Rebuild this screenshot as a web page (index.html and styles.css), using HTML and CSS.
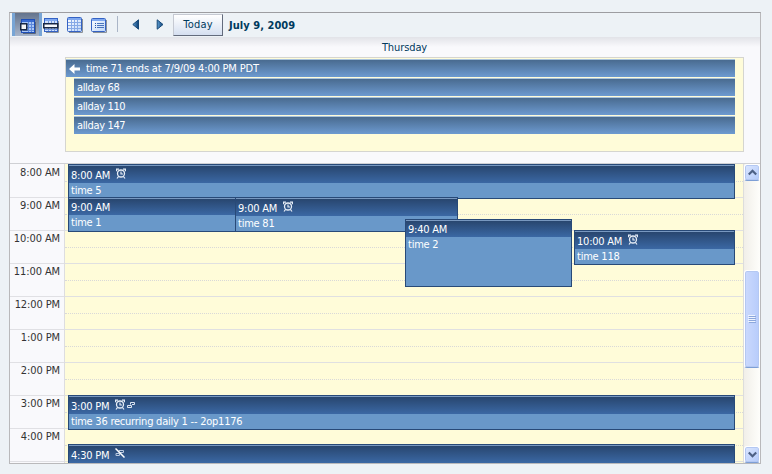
FILE: index.html
```html
<!DOCTYPE html>
<html lang="en">
<head>
<meta charset="utf-8">
<title>Calendar</title>
<link rel="stylesheet" href="styles.css">
</head>
<body>
<svg width="0" height="0" class="defs">
  <defs>
    <linearGradient id="cell" x1="0" y1="0" x2="1" y2="1"><stop offset="0" stop-color="#fff"/><stop offset="1" stop-color="#bcd5f8"/></linearGradient>
    <linearGradient id="tri" x1="0" y1="0" x2="1" y2="0"><stop offset="0" stop-color="#5f9fd4"/><stop offset="1" stop-color="#0c3e73"/></linearGradient>
    <symbol id="month" viewBox="0 0 16 16">
      <path d="M2 15.5H15.5V2" stroke="#8a9199" fill="none"/>
      <rect x=".5" y=".5" width="14" height="14" rx="1" fill="url(#cell)" stroke="#3462c4"/>
      <path d="M1 2H14" stroke="#7fa8ef" stroke-width="2"/>
      <path d="M4.5 3V14M7.5 3V14M10.5 3V14M1 5.5H14M1 8.5H14M1 11.5H14" stroke="#86a9e6"/>
    </symbol>
    <symbol id="alarm" viewBox="0 0 10 11">
      <circle cx="5" cy="5.5" r="3.500" fill="none" stroke="#e9eff7" stroke-width="1.300"/>
      <path d="M5 3.500V6H7M1 10.500L2.600 8.400M9 10.500L7.400 8.400M.6 3.300V1.200H3M9.400 3.300V1.200H7" stroke="#e4ebf5" stroke-width="1.200" fill="none"/>
    </symbol>
    <symbol id="recur" viewBox="0 0 10 10">
      <path d="M3.500 4.500V2.500H7.500V4.500H5M.5 5.500H4.500V7.500H.5Z" stroke="#dce5f2" fill="none"/>
    </symbol>
  </defs>
</svg>
<main class="calendar">
  <header class="toolbar">
    <span class="view selected"><svg width="16" height="16" viewBox="0 0 16 16">
      <path d="M3 14.500H15.500V3" stroke="#596579" fill="none"/>
      <rect x="1.500" y=".5" width="13" height="13" fill="#a9c6f5" stroke="#1e4fb8"/>
      <path d="M2 2H14" stroke="#386bd2" stroke-width="2"/><path d="M8.500 3V13M11.500 3V13M3 5.500H14M3 8.500H14M3 11.500H14" stroke="#5c88dc"/>
      <rect x=".75" y="4.750" width="6" height="6" fill="#f4f4f4" stroke="#172745" stroke-width="1.500"/></svg></span>
    <svg class="icon week" width="17" height="16" viewBox="0 0 17 16">
      <path d="M3 14.500H15.500V3" stroke="#8a9199" fill="none"/>
      <rect x="1.500" y=".5" width="13" height="13" fill="#d2e2fb" stroke="#3462c4"/>
      <path d="M2 2H14" stroke="#7fa8ef" stroke-width="2"/><path d="M5.500 3V13M8.500 3V13M11.500 3V13M2 11.500H14" stroke="#7298e0"/>
      <rect x=".75" y="5.750" width="14" height="4" fill="#f7f9fc" stroke="#172745" stroke-width="1.500"/></svg>
    <svg class="icon month" width="16" height="16"><use href="#month"/></svg>
    <svg class="icon list" width="16" height="16" viewBox="0 0 16 16">
      <path d="M2 14.500H15.500V2" stroke="#8a9199" fill="none"/>
      <rect x=".5" y=".5" width="14" height="13" rx="1" fill="url(#cell)" stroke="#3462c4"/>
      <path d="M1 2H14" stroke="#7fa8ef" stroke-width="2"/>
      <path d="M6 5.500H13M6 7.500H13M6 9.500H13" stroke="#4a74bb"/><path d="M4 5.500H5M4 7.500H5M4 9.500H5" stroke="#2855aa"/></svg>
    <i class="separator"></i>
    <svg class="prev" width="8" height="11" viewBox="0 0 8 11"><path d="M6.500 .8V10.200L.8 5.500Z" fill="url(#tri)" stroke="#164878"/></svg>
    <svg class="next" width="8" height="11" viewBox="0 0 8 11"><path d="M1.200 .8V10.200L7 5.500Z" fill="url(#tri)" stroke="#164878"/></svg>
    <button class="today">Today</button>
    <h1 class="date">July 9, 2009</h1>
  </header>
  <section class="top">
    <div class="weekday">Thursday</div>
    <div class="allday">
      <div class="bar continued"><svg width="11" height="10" viewBox="0 0 11 10"><path d="M5.500 0V3.500H11V6.500H5.500V10L0 5Z" fill="#fff"/></svg><span>time 71 ends at 7/9/09 4:00 PM PDT</span></div>
      <div class="bar">allday 68</div>
      <div class="bar">allday 110</div>
      <div class="bar">allday 147</div>
    </div>
  </section>
  <section class="schedule">
    <div class="hours">
      <div>8:00 AM</div><div>9:00 AM</div><div>10:00 AM</div><div>11:00 AM</div><div>12:00 PM</div><div>1:00 PM</div><div>2:00 PM</div><div>3:00 PM</div><div>4:00 PM</div>
    </div>
    <div class="day">
      <div class="slot"></div><div class="slot"></div><div class="slot"></div><div class="slot"></div><div class="slot"></div><div class="slot"></div><div class="slot"></div><div class="slot"></div><div class="slot"></div>
      <article class="event e5"><header>8:00 AM<svg width="10" height="11"><use href="#alarm"/></svg></header><p>time 5</p></article>
      <article class="event e1"><header>9:00 AM</header><p>time 1</p></article>
      <article class="event e81"><header>9:00 AM<svg width="10" height="11"><use href="#alarm"/></svg></header><p>time 81</p></article>
      <article class="event e2"><header>9:40 AM</header><p>time 2</p></article>
      <article class="event e118"><header>10:00 AM<svg width="10" height="11"><use href="#alarm"/></svg></header><p>time 118</p></article>
      <article class="event e36"><header>3:00 PM<svg width="10" height="11"><use href="#alarm"/></svg><svg class="repeat" width="10" height="10"><use href="#recur"/></svg></header><p>time 36 recurring daily 1 -- 2op1176</p></article>
      <article class="event e430"><header>4:30 PM<svg width="11" height="10" viewBox="0 0 11 10"><path d="M4 4.500V2.500H8.500V4.500H5M1 5.500H4.500V7.500H1Z" stroke="#b9c9e0" fill="none"/><path d="M.5 .5L9.500 9.500" stroke="#fff" stroke-width="1.500"/></svg></header></article>
    </div>
    <div class="scrollbar">
      <div class="arrow"><svg width="9" height="7" viewBox="0 0 9 7"><path d="M.8 5.500L4.500 1.800L8.200 5.500" stroke="#4d6185" stroke-width="2.200" fill="none"/></svg></div>
      <div class="thumb"><i></i><i></i><i></i><i></i></div>
      <div class="arrow down"><svg width="9" height="7" viewBox="0 0 9 7"><path d="M.8 1.500L4.500 5.200L8.200 1.500" stroke="#4d6185" stroke-width="2.200" fill="none"/></svg></div>
    </div>
  </section>
</main>
</body>
</html>
```
FILE: styles.css
```css
* { box-sizing: border-box; }
body {
  margin: 0;
  height: 474px;
  overflow: hidden;
  padding: 12px 11px 10px 9px;
  background: #edf2f6;
  font: 11px/13px "DejaVu Sans Condensed", "DejaVu Sans", sans-serif;
  font-stretch: condensed;
  color: #333;
}
.defs { position: absolute; }
svg { display: block; flex: none; }
.calendar {
  width: 752px;
  height: 452px;
  border: 1px solid #b9b9bb;
  border-top-color: #9d9da1;
  display: flex;
  flex-direction: column;
}
.toolbar { height: 24px; display: flex; align-items: flex-start; padding-left: 2px; }
.view {
  width: 30px;
  height: 23px;
  padding: 6px 0 0 5px;
  border: solid #78a5d5;
  border-width: 0 3px;
  background: linear-gradient(#64748d, #a7b5cb);
}
.icon { margin: 4px 0 0 8px; }
.week { margin: 5px 0 0 1px; }
.month { margin-left: 7px; }
.list { margin-top: 5px; }
.separator { width: 1px; height: 16px; background: #aab5c7; margin: 3px 0 0 10px; }
.prev { margin: 6px 0 0 14px; }
.next { margin: 6px 0 0 16px; }
.today {
  width: 50px;
  height: 22px;
  margin: 1px 0 0 9px;
  padding: 0 0 1px;
  border: 1px solid #c5c9d2;
  border-right-color: #636b7c;
  border-bottom-color: #636b7c;
  background: linear-gradient(#fff, #d5dff0);
  color: #003a5d;
  font: inherit;
  letter-spacing: .2px;
}
.date { margin: 6px 0 0 6px; font-size: 11px; line-height: 13px; font-weight: bold; color: #003a5d; letter-spacing: .05px; }
.top {
  height: 126px;
  padding: 4px 16px 0 55px;
  background: linear-gradient(#e2e3e8, #f9f9fc 10px);
  display: flex;
  flex-direction: column;
}
.weekday { height: 16px; text-align: center; color: #003a5d; letter-spacing: -.1px; }
.allday {
  height: 95px;
  padding: 1px 8px 0 0;
  border: 1px solid #d5d5d0;
  background: #fffcd9;
}
.bar {
  height: 18px;
  margin: 0 0 1px 8px;
  padding: 2px 0 0 3px;
  border-top: 1px solid #a9c3dc;
  background: linear-gradient(#496b90, #6d9ad0);
  color: #fff;
  letter-spacing: -.35px;
}
.continued { margin-left: 0; display: flex; gap: 6px; letter-spacing: -.18px; }
.continued svg { margin-top: 2px; }
.schedule {
  height: 300px;
  border-top: 1px solid #cfd0d4;
  background: #f9f9fc;
  display: flex;
  overflow: hidden;
}
.hours { width: 55px; padding-top: 1px; border-right: 1px solid #dddde0; letter-spacing: -.1px; }
.hours div { height: 33px; padding: 1px 4px 0 0; border-bottom: 1px solid #e0e0e4; text-align: right; }
.day {
  position: relative;
  width: 679px;
  padding-top: 1px;
  border-right: 1px solid #dddddc;
  background: #fffcd9;
}
.slot { height: 33px; border-bottom: 1px solid #e0e0e1; }
.slot::before { content: ""; display: block; height: 16px; border-bottom: 1px dotted #d9d9d8; }
.event {
  position: absolute;
  left: 3px;
  border: 1px solid #284a78;
  background: #6998c9;
  color: #fff;
  letter-spacing: -.23px;
}
.event header {
  height: 18px;
  padding: 3px 0 0 2px;
  border-top: 1px solid #7898c0;
  background: linear-gradient(#28466f, #3b68a4);
  display: flex;
}
.event header svg { margin: -1px 0 0 6px; }
.event header .repeat { margin: 0 0 0 2px; }
.event p { margin: 0; padding: 1px 0 0 2px; }
.e5, .e36, .e430 { width: 667px; height: 35px; }
.e5 { top: 0; }
.e1 { top: 33px; width: 168px; height: 35px; }
.e1 header, .e2 header { height: 17px; padding-top: 2px; }
.e81 { top: 33px; left: 170px; width: 223px; height: 35px; }
.e2 { top: 55px; left: 340px; width: 167px; height: 68px; }
.e118 { top: 66px; left: 509px; width: 161px; height: 35px; }
.e36 { top: 231px; }
.e430 { top: 280px; }
.scrollbar {
  width: 16px;
  height: 299px;
  background: linear-gradient(90deg, #f1efe9, #fefefb);
  display: flex;
  flex-direction: column;
}
.arrow, .thumb {
  width: 16px;
  border: 1px solid #fff;
  border-radius: 3px;
  box-shadow: inset 0 0 0 1px #b4c8f2;
  background: linear-gradient(135deg, #dce7ff, #b3cafa);
  border-bottom-color: #7d9fd6;
  display: flex;
  align-items: center;
  justify-content: center;
}
.arrow { height: 17px; }
.down { margin-top: auto; }
.thumb {
  height: 98px;
  margin-top: 89px;
  flex-direction: column;
  gap: 1px;
  background: linear-gradient(90deg, #cbd9fd, #b7ccfb);
}
.thumb i { width: 7px; height: 1px; background: #8ca7dc; box-shadow: -1px -1px #eef4ff; }
```
